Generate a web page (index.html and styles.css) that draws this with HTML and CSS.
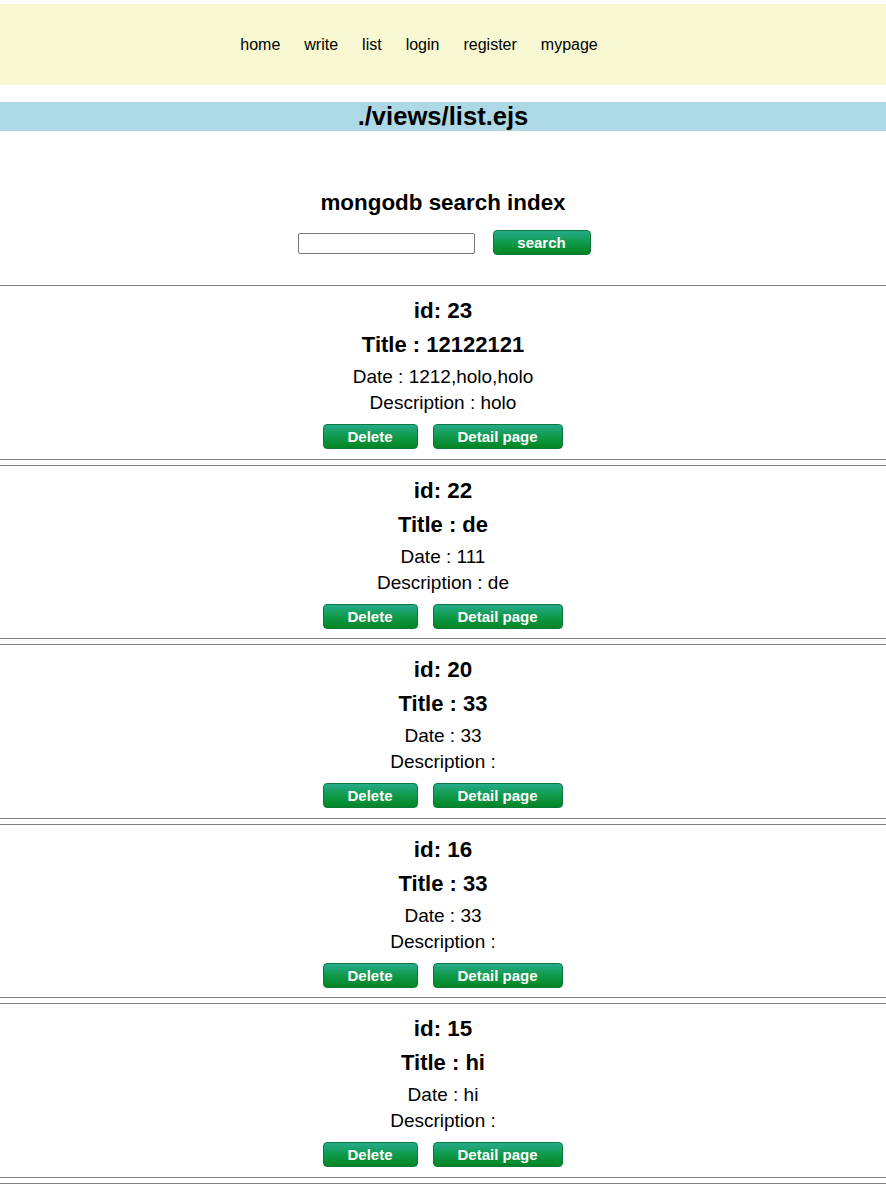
FILE: index.html
```html
<!DOCTYPE html>
<html>
<head>
<meta charset="utf-8">
<link rel="stylesheet" href="styles.css">
</head>
<body>
<nav class="nav">
  <a class="nav-link" href="#">home</a>
  <a class="nav-link" href="#">write</a>
  <a class="nav-link" href="#">list</a>
  <a class="nav-link" href="#">login</a>
  <a class="nav-link" href="#">register</a>
  <a class="nav-link" href="#">mypage</a>
</nav>
<h1 class="page-title">./views/list.ejs</h1>
<section class="search">
  <h2 class="search-title">mongodb search index</h2>
  <div class="search-row">
    <input class="search-input" type="text">
    <button class="btn btn-search">search</button>
  </div>
</section>
<div class="list">
  <div class="item">
    <div class="item-id">id: 23</div>
    <div class="item-title">Title : 12122121</div>
    <div class="item-text">Date : 1212,holo,holo</div>
    <div class="item-text">Description : holo</div>
    <div class="item-actions"><button class="btn btn-delete">Delete</button><button class="btn btn-detail">Detail page</button></div>
  </div>
  <div class="item">
    <div class="item-id">id: 22</div>
    <div class="item-title">Title : de</div>
    <div class="item-text">Date : 111</div>
    <div class="item-text">Description : de</div>
    <div class="item-actions"><button class="btn btn-delete">Delete</button><button class="btn btn-detail">Detail page</button></div>
  </div>
  <div class="item">
    <div class="item-id">id: 20</div>
    <div class="item-title">Title : 33</div>
    <div class="item-text">Date : 33</div>
    <div class="item-text">Description : </div>
    <div class="item-actions"><button class="btn btn-delete">Delete</button><button class="btn btn-detail">Detail page</button></div>
  </div>
  <div class="item">
    <div class="item-id">id: 16</div>
    <div class="item-title">Title : 33</div>
    <div class="item-text">Date : 33</div>
    <div class="item-text">Description : </div>
    <div class="item-actions"><button class="btn btn-delete">Delete</button><button class="btn btn-detail">Detail page</button></div>
  </div>
  <div class="item">
    <div class="item-id">id: 15</div>
    <div class="item-title">Title : hi</div>
    <div class="item-text">Date : hi</div>
    <div class="item-text">Description : </div>
    <div class="item-actions"><button class="btn btn-delete">Delete</button><button class="btn btn-detail">Detail page</button></div>
  </div>
  <div class="item-divider"></div>
</div>
</body>
</html>
```

FILE: styles.css
```css
html, body {
  margin: 0;
  padding: 0;
  background: #ffffff;
  font-family: "Liberation Sans", Arial, sans-serif;
  color: #000;
}

.nav {
  margin-top: 4px;
  height: 81px;
  background: #f8f8d2;
  display: flex;
  align-items: center;
  justify-content: center;
  gap: 24px;
  padding-right: 48px;
}

.nav-link {
  font-size: 16px;
  color: #000;
  text-decoration: none;
  line-height: 20px;
}

.page-title {
  margin: 17px 0 0;
  height: 29px;
  line-height: 29px;
  background: #add8e6;
  text-align: center;
  font-size: 25.6px;
  font-weight: bold;
}

.search {
  padding-top: 60px;
  padding-bottom: 30px;
  text-align: center;
}

.search-title {
  margin: 0;
  font-size: 22.4px;
  line-height: 24px;
  font-weight: bold;
}

.search-row {
  margin-top: 15px;
  display: flex;
  justify-content: center;
  align-items: flex-start;
  gap: 18px;
  padding-left: 2px;
}

.search-input {
  box-sizing: border-box;
  width: 177px;
  height: 21px;
  margin: 3px 0 0;
  border: 1px solid #767676;
  border-radius: 2px;
  padding: 0 2px;
  background: #fff;
}

.btn {
  box-sizing: border-box;
  height: 25px;
  margin: 0;
  padding: 0;
  border: 1px solid #0a7a3c;
  border-radius: 4px;
  background: linear-gradient(to bottom, #26ab8c 0%, #0f9a4a 50%, #038524 100%);
  color: #fff;
  font-family: "Liberation Sans", Arial, sans-serif;
  font-size: 15px;
  font-weight: bold;
  line-height: 23px;
  text-align: center;
  cursor: pointer;
}

.btn-search {
  width: 98px;
}

.list {
  display: flex;
  flex-direction: column;
  gap: 5px;
}

.item {
  border-top: 1px solid #808080;
  border-bottom: 1px solid #808080;
  padding: 13px 0 9.5px;
  text-align: center;
}

.item-divider {
  border-top: 1px solid #808080;
  height: 0;
}

.item-id {
  font-size: 22.4px;
  font-weight: bold;
  line-height: 24px;
}

.item-title {
  margin-top: 9px;
  margin-bottom: 6px;
  font-size: 22px;
  font-weight: bold;
  line-height: 26px;
}

.item-text {
  font-size: 19px;
  line-height: 26px;
}

.item-actions {
  margin-top: 8px;
  display: flex;
  justify-content: center;
  gap: 15px;
  padding-right: 1px;
}

.btn-delete {
  width: 95px;
}

.btn-detail {
  width: 130px;
}
```
